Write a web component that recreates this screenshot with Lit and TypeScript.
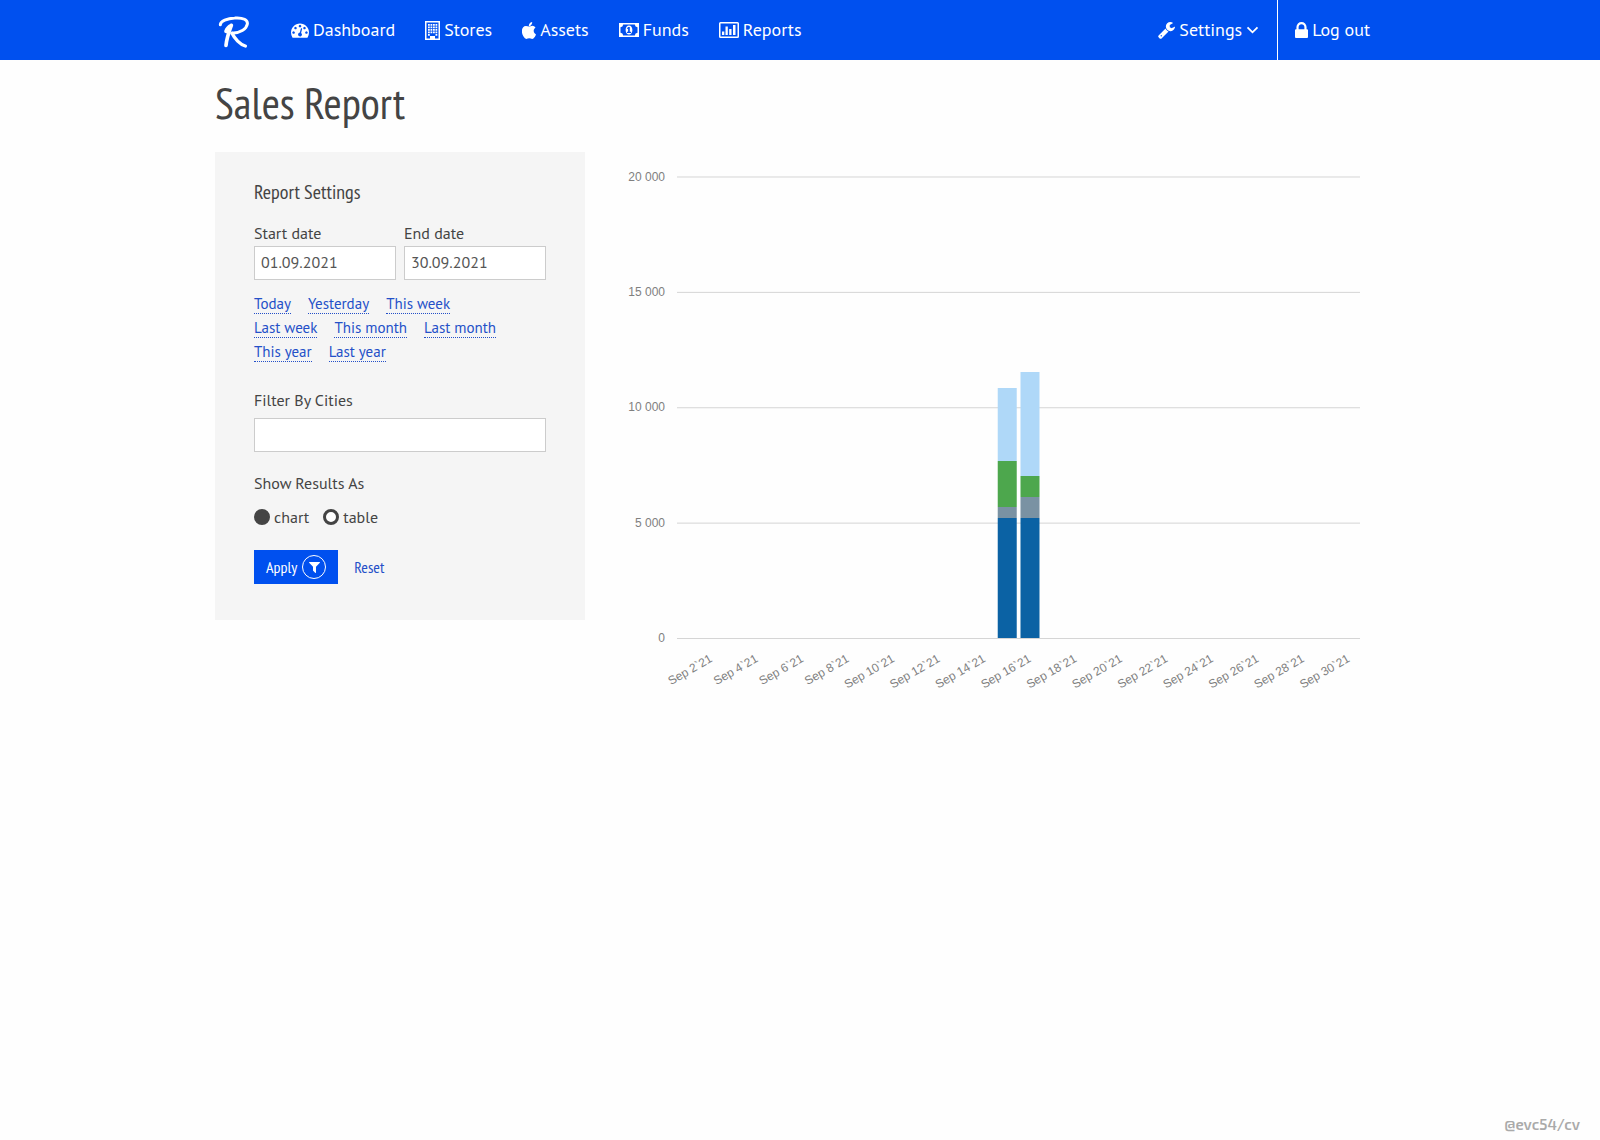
import { LitElement, html, css, svg } from "lit";
import { customElement } from "lit/decorators.js";

interface Column { day: number; parts: number[] }
const COLORS = ["#0b62a4", "#7a92a3", "#4da74d", "#afd8f8"];
const COLUMNS: Column[] = [
  { day: 15, parts: [5220, 460, 2000, 3160] },
  { day: 16, parts: [5220, 900, 920, 4500] },
];
const LEFT = 62, RIGHT = 745, TOP = 25, BASE = 486.5, MAX = 20000;
const SLOT = (RIGHT - LEFT) / 30;
const yOf = (v: number) => BASE - (v / MAX) * (BASE - TOP);

const ICONS: Record<string, unknown> = {
  gauge: svg`<svg class="icon" viewBox="0 0 1792 1792" width="18" height="18"><path d="M384 1152q0-53-37.5-90.5t-90.5-37.5-90.5 37.5-37.5 90.5 37.5 90.5 90.5 37.5 90.5-37.5 37.5-90.5zm192-448q0-53-37.5-90.5t-90.5-37.5-90.5 37.5-37.5 90.5 37.5 90.5 90.5 37.5 90.5-37.5 37.5-90.5zm428 481l101-382q6-26-7.5-48.5t-38.5-29.5-48 6.5-30 39.5l-101 382q-60 5-107 43.5t-63 98.5q-20 77 20 146t117 89 146-20 89-117q16-60-6-117t-72-91zm660-33q0-53-37.5-90.5t-90.5-37.5-90.5 37.5-37.5 90.5 37.5 90.5 90.5 37.5 90.5-37.5 37.5-90.5zm-640-640q0-53-37.5-90.5t-90.5-37.5-90.5 37.5-37.5 90.5 37.5 90.5 90.5 37.5 90.5-37.5 37.5-90.5zm448 192q0-53-37.5-90.5t-90.5-37.5-90.5 37.5-37.5 90.5 37.5 90.5 90.5 37.5 90.5-37.5 37.5-90.5zm320 448q0 261-141 483-19 29-54 29h-1402q-35 0-54-29-141-221-141-483 0-182 71-348t191-286 286-191 348-71 348 71 286 191 191 286 71 348z"/></svg>`,
  building: svg`<svg class="icon" viewBox="0 0 15 19" width="15" height="19"><path fill-rule="evenodd" d="M0 0h15v19H0zM1.500 1.500v16H5V15h5v2.500h3.500v-16z"/><path d="M3 3h1.800v1.800H3zm2.500 0h1.800v1.800H5.500zM8 3h1.800v1.800H8zm2.500 0h1.800v1.800h-1.800zM3 5.500h1.800v1.800H3zm2.500 0h1.800v1.800H5.500zm2.500 0h1.800v1.800H8zm2.500 0h1.800v1.800h-1.800zM3 8h1.800v1.800H3zm2.500 0h1.800v1.800H5.500zM8 8h1.800v1.800H8zm2.500 0h1.800v1.800h-1.800zM3 10.500h1.800v1.800H3zm2.500 0h1.800v1.800H5.500zm2.500 0h1.800v1.800H8zm2.500 0h1.800v1.800h-1.800zM3 13h1.800v1.800H3zm7.500 0h1.800v1.800h-1.800z"/></svg>`,
  apple: svg`<svg class="icon" viewBox="206 0 1380 1664" width="14" height="17"><path d="M1585 1215q-39 125-123 250-129 196-257 196-49 0-140-32-86-32-151-32-61 0-142 33-81 34-132 34-152 0-301-259-147-261-147-503 0-228 113-374 113-144 284-144 72 0 177 30 104 30 138 30 45 0 143-34 102-34 173-34 119 0 213 65 52 36 104 100-79 67-114 118-65 94-65 207 0 124 69 223t158 126zm-376-1173q0 61-29 136-30 75-93 138-54 54-108 72-37 11-104 17 3-149 78-257 74-107 250-148 1 3 2.500 11t2.500 11q0 4 .5 10t.5 10z"/></svg>`,
  money: svg`<svg class="icon" viewBox="0 0 20 14" width="20" height="14"><path fill-rule="evenodd" d="M0 0h20v14H0zM4.200 1.500A3 3 0 0 1 1.500 4.200v5.600A3 3 0 0 1 4.200 12.500h11.600a3 3 0 0 1 2.700-2.700V4.200a3 3 0 0 1-2.700-2.700z"/><path fill-rule="evenodd" d="M10 2.500c2 0 3.400 2 3.400 4.500s-1.400 4.500-3.400 4.500S6.600 9.500 6.600 7 8 2.500 10 2.500zM9.300 4 7.800 5.300l.6.700.7-.5v3.300H8V10h4V8.800h-1.200V4z"/></svg>`,
  chart: svg`<svg class="icon" viewBox="0 0 20 16" width="20" height="16"><path fill-rule="evenodd" d="M1.500 0h17A1.500 1.500 0 0 1 20 1.500v13a1.500 1.500 0 0 1-1.500 1.500h-17A1.500 1.500 0 0 1 0 14.500v-13A1.500 1.500 0 0 1 1.500 0zm0 1.500v13h17v-13z"/><path d="M3 9.500h2.300V13H3zM6.500 4.500h2.300V13H6.500zM10.200 7h2.300v6h-2.300zM14 3h2.500v10H14z"/></svg>`,
  wrench: svg`<svg class="icon" viewBox="64 128 1664 1664" width="17" height="17"><path d="M448 1472q0-26-19-45t-45-19-45 19-19 45 19 45 45 19 45-19 19-45zm644-420l-682 682q-37 37-90 37-52 0-91-37l-106-108q-38-36-38-90 0-53 38-91l681-681q39 98 114.500 173.500t173.500 114.500zm634-435q0 39-23 106-47 134-164.500 217.500t-258.500 83.500q-185 0-316.500-131.500t-131.500-316.500 131.500-316.500 316.500-131.500q58 0 121.500 16.500t107.500 46.500q16 11 16 28t-16 28l-293 169v224l193 107q5-3 79-48.500t135.500-81 70.500-35.500q15 0 23.500 10t8.500 25z"/></svg>`,
  lock: svg`<svg class="icon" viewBox="320 128 1152 1408" width="13" height="16"><path d="M640 768h512v-192q0-106-75-181t-181-75-181 75-75 181v192zm832 96v576q0 40-28 68t-68 28h-960q-40 0-68-28t-28-68v-576q0-40 28-68t68-28h32v-192q0-184 132-316t316-132 316 132 132 316v192h32q40 0 68 28t28 68z"/></svg>`,
  filter: svg`<svg class="icon" viewBox="190 256 1412 1410" width="11" height="11"><path d="M1595 295q17 41-14 70l-493 493v742q0 42-39 59-13 5-25 5-27 0-45-19l-256-256q-19-19-19-45v-486l-493-493q-31-29-14-70 17-39 59-39h1280q42 0 59 39z"/></svg>`,
};

const NAV = [
  ["gauge", "Dashboard"], ["building", "Stores"], ["apple", "Assets"], ["money", "Funds"], ["chart", "Reports"],
];
const PERIODS = ["Today", "Yesterday", "This week", "Last week", "This month", "Last month", "This year", "Last year"];

@customElement("sales-chart")
class SalesChart extends LitElement {
  static styles = css`
    :host { display: block; }
    svg { display: block; width: 100%; height: auto; }
    text { font: 12px "Liberation Sans", Arial, sans-serif; fill: #808080; text-anchor: end; }
    .line { stroke: #d5d5d5; }
  `;
  render() {
    const days = Array.from({ length: 15 }, (_, i) => (i + 1) * 2);
    return html`<svg viewBox="0 0 770 550" role="img" aria-label="Sales per day">
      ${[20000, 15000, 10000, 5000, 0].map((v) => svg`
        <line class="line" x1=${LEFT} x2=${RIGHT} y1=${yOf(v)} y2=${yOf(v)}></line>
        <text x="50" y=${Math.floor(yOf(v)) + 4}>${v ? `${v / 1000} 000` : "0"}</text>`)}
      ${COLUMNS.map((c) => {
        let sum = 0;
        return c.parts.map((p, i) => {
          const bottom = Math.floor(yOf(sum));
          sum += p;
          const top = Math.floor(yOf(sum));
          return svg`<rect x=${LEFT + (c.day - 1) * SLOT + 2} y=${top} width="19" height=${bottom - top} fill=${COLORS[i]}></rect>`;
        });
      })}
      ${days.map((d) => {
        const x = LEFT + (d - 0.5) * SLOT + 2;
        return svg`<text x=${x} y="509" transform="rotate(-30 ${x} 509)">Sep ${d}\`21</text>`;
      })}
    </svg>`;
  }
}

@customElement("app-root")
class AppRoot extends LitElement {
  static styles = css`
    :host {
      display: flex; flex-direction: column; min-height: 100vh;
      background: #fefefe; color: #444;
      font: 16px/24px "PT Sans", "Noto Sans", sans-serif;
    }
    * { box-sizing: border-box; }
    a { color: #2450c8; text-decoration: none; }
    .icon { fill: currentColor; flex: none; }
    .wrap { width: 100%; max-width: 1170px; margin: 0 auto; }
    .bar { background: #0050ef; }
    .bar .wrap { display: flex; height: 60px; }
    .bar a { color: #fff; display: flex; align-items: center; gap: 4px; font-size: 18px; }
    .bar .logo { padding: 4px 2px 0; }
    .menu { display: flex; gap: 30px; margin-left: 39px; flex: 1; }
    .bar .settings { padding-right: 18px; border-right: 1px solid #fff; }
    .bar .logout { padding: 0 15px 0 17px; }
    .narrow, h1, h2 { font-family: "PT Sans Narrow", "Liberation Sans Narrow", "Noto Sans", sans-serif; font-weight: 400; }
    h1 { margin: 0; padding: 19px 0 25px; font-size: 44px; line-height: 48px; }
    h2 { margin: 0; font-size: 20px; line-height: 24px; }
    .content { display: grid; grid-template-columns: 370px minmax(0, 1fr); gap: 30px; align-items: start; }
    .panel { background: #f5f5f5; padding: 28px 39px 36px; display: flex; flex-direction: column; }
    .dates { display: grid; grid-template-columns: 1fr 1fr; gap: 8px; margin-top: 17px; }
    .field { display: flex; flex-direction: column; gap: 1px; }
    .text { height: 34px; width: 100%; border: 1px solid #ccc; border-radius: 0; background: #fff; color: #555; font: inherit; padding: 0 6px 2px; }
    .periods { list-style: none; margin: 14px 0 0; padding: 0 28px 0 0; display: flex; flex-wrap: wrap; column-gap: 17px; font-size: 15px; }
    .periods li { height: 24px; }
    .periods a { display: block; height: 20px; line-height: 20px; border-bottom: 1px dotted #2450c8; }
    .cities { margin-top: 22px; gap: 6px; }
    fieldset { border: 0; margin: 19px 0 0; padding: 0; }
    legend { padding: 0; margin-bottom: 10px; }
    .radios { display: flex; gap: 14px; }
    .radios label { display: flex; align-items: center; gap: 4px; }
    .radios input { appearance: none; margin: 0; width: 16px; height: 16px; border: 3px solid #444; border-radius: 50%; background: #fff; }
    .radios input:checked { background: #444; }
    .actions { display: flex; align-items: center; gap: 16px; margin-top: 21px; }
    .apply { height: 34px; padding: 0 12px; border: 0; background: #0050ef; color: #fff; display: flex; align-items: center; gap: 5px; font-size: 16px; }
    .ring { width: 24px; height: 24px; border: 1px solid #fff; border-radius: 50%; display: grid; place-items: center; }
    .reset { font-size: 16px; }
    footer { margin-top: auto; padding: 0 20px 4px; text-align: right; color: #aaa; font: 600 15px/24px "Exo 2", Exo, Roboto, sans-serif; }
  `;
  render() {
    return html`
      <header class="bar"><div class="wrap">
        <a class="logo" href="#" aria-label="Home"><svg width="33" height="32" viewBox="9 18 99 96" fill="none" stroke="#fff" stroke-linecap="round" stroke-linejoin="round"><path stroke-width="9" d="M19 44C19 34 40 25 62 24c26-2 40 6 38 18C97 58 78 68 54 70"/><path stroke-width="11" d="M52 46C46 62 38 84 36 106M52 46C44 50 38 58 36 64"/><path stroke-width="10" d="M54 70C62 86 78 104 94 108"/></svg></a>
        <nav class="menu">${NAV.map(([i, t]) => html`<a href="#">${ICONS[i]}<span>${t}</span></a>`)}</nav>
        <a class="settings" href="#">${ICONS.wrench}<span>Settings</span><svg width="13" height="8" viewBox="0 0 13 8" fill="none" stroke="#fff" stroke-width="1.800"><path d="M1.500 1.300l5 5 5-5"/></svg></a>
        <a class="logout" href="#">${ICONS.lock}<span>Log out</span></a>
      </div></header>
      <main class="wrap">
        <h1>Sales Report</h1>
        <div class="content">
          <form class="panel" @submit=${(e: Event) => e.preventDefault()}>
            <h2>Report Settings</h2>
            <div class="dates">
              <label class="field" for="start">Start date<input class="text" id="start" type="text" value="01.09.2021"></label>
              <label class="field" for="end">End date<input class="text" id="end" type="text" value="30.09.2021"></label>
            </div>
            <ul class="periods">${PERIODS.map((p) => html`<li><a href="#">${p}</a></li>`)}</ul>
            <label class="field cities" for="cities">Filter By Cities<input class="text" id="cities" type="text"></label>
            <fieldset>
              <legend>Show Results As</legend>
              <div class="radios">
                <label><input type="radio" name="view" value="chart" checked>chart</label>
                <label><input type="radio" name="view" value="table">table</label>
              </div>
            </fieldset>
            <div class="actions">
              <button class="apply narrow" type="submit">Apply<span class="ring">${ICONS.filter}</span></button>
              <a class="reset narrow" href="#">Reset</a>
            </div>
          </form>
          <sales-chart></sales-chart>
        </div>
      </main>
      <footer>@evc54/cv</footer>`;
  }
}
